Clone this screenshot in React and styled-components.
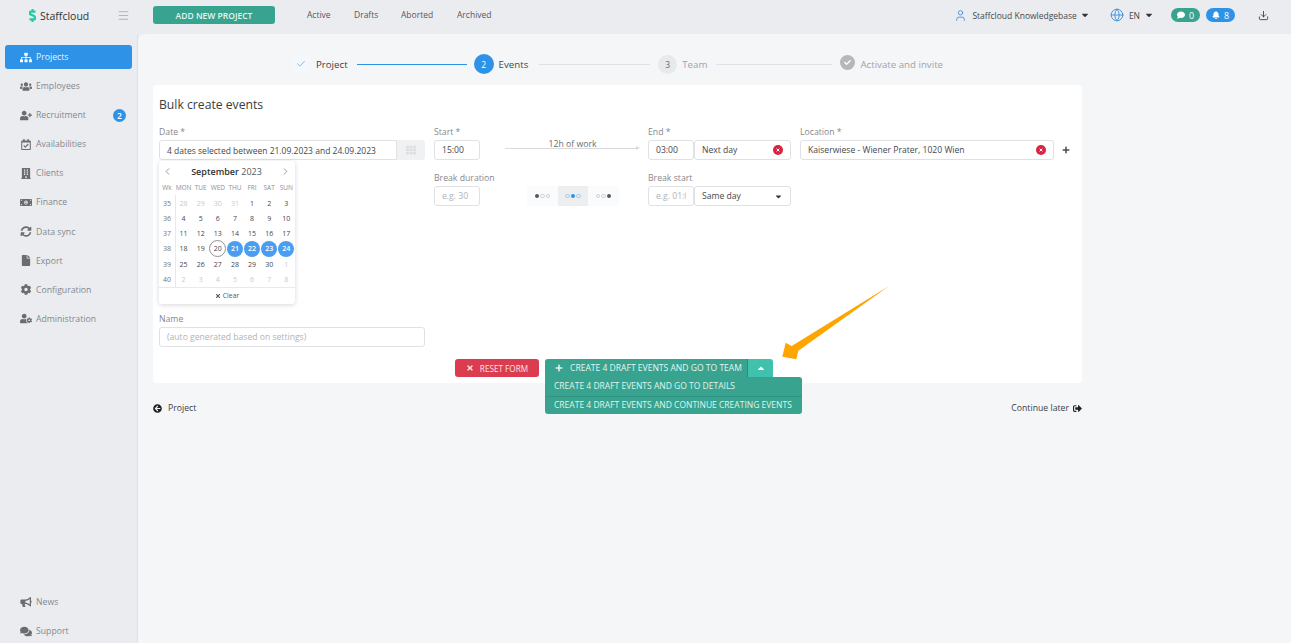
import styled, { createGlobalStyle } from 'styled-components'
import {
  FaSitemap, FaUsers, FaUserPlus, FaRegCalendarCheck, FaBuilding, FaMoneyBillAlt, FaSyncAlt, FaFile,
  FaCog, FaUserCog, FaBullhorn, FaComments, FaComment, FaBell, FaCaretDown, FaCaretUp, FaTimes, FaPlus,
  FaArrowCircleLeft, FaSignOutAlt, FaTh, FaCheck,
} from 'react-icons/fa'
import { User, Globe, Download, Menu, ChevronLeft, ChevronRight, Check } from 'lucide-react'

const GlobalStyle = createGlobalStyle`
  html, body { margin: 0; padding: 0; height: 100%; }
  body { background: #ebecf0; font-family: "Open Sans", "Noto Sans", sans-serif; font-size: 9px; color: #3c4043; overflow: hidden; }
  * { box-sizing: border-box; }
`

const Shell = styled.div`
  height: 100vh;
  display: flex;
  flex-direction: column;
`

const TopBar = styled.header`
  height: 34px;
  flex: none;
  display: flex;
  align-items: center;
  position: relative;
`

const Brand = styled.div`
  width: 117px;
  padding-left: 29px;
  display: flex;
  align-items: center;
  gap: 4px;
  font-size: 10.5px;
  font-weight: 500;
  color: #333;
  margin-top: -3px;
`

const MenuButton = styled.div`
  width: 36px;
  display: flex;
  color: #a5a7ab;
  margin-top: -3px;
`

const AddButton = styled.button`
  width: 122px;
  height: 18px;
  margin-top: -4px;
  border: 0;
  border-radius: 3px;
  background: #38a38e;
  color: #e4f5f0;
  font: 600 8.5px "Open Sans", sans-serif;
`

const Tabs = styled.nav`
  display: flex;
  margin-left: 32px;
  margin-top: -5px;
`

const Tab = styled.span`
  width: ${p => p.$w}px;
  color: #55585c;
  font-size: 8.5px;
`

const TopRight = styled.div`
  margin-left: auto;
  display: flex;
  align-items: center;
  margin-top: -4px;
  color: #45484c;
  font-size: 8.5px;
`

const TopLabel = styled.span`
  margin-left: 5px;
`

const Pill = styled.span`
  width: 29px;
  height: 14px;
  border-radius: 7px;
  background: ${p => p.$bg};
  color: #fff;
  display: flex;
  align-items: center;
  justify-content: center;
  gap: 4px;
  font-size: 9px;
  margin-left: ${p => p.$ml}px;
`

const Caret = styled.span`
  display: flex;
  margin: 0 ${p => p.$mr}px 0 ${p => p.$ml}px;
  color: #333;
`

const Body = styled.div`
  flex: 1;
  display: flex;
  min-height: 0;
`

const Sidebar = styled.aside`
  width: 138px;
  flex: none;
  display: flex;
  flex-direction: column;
  padding: 11px 5px 0 5px;
  border-right: 1px solid #e0e1e5;
`

const NavItem = styled.div`
  height: ${p => p.$active ? 24 : 29.1}px;
  margin-bottom: ${p => p.$active ? 2.5 : 0}px;
  padding-left: 15px;
  flex: none;
  display: flex;
  align-items: center;
  gap: 4px;
  border-radius: 3px;
  background: ${p => p.$active ? '#2e93e6' : 'transparent'};
  color: ${p => p.$active ? '#e6f2fc' : '#85888c'};
  font-size: 8.7px;
  position: relative;
  svg { color: ${p => p.$active ? '#fff' : '#6a6c70'}; width: 12px; flex: none; }
`

const NavBadge = styled.span`
  position: absolute;
  right: 6px;
  top: 8px;
  width: 13px;
  height: 13px;
  border-radius: 50%;
  background: #2e93e6;
  color: #fff;
  font-size: 8.5px;
  font-weight: 600;
  display: flex;
  align-items: center;
  justify-content: center;
`

const NavBottom = styled.div`
  margin-top: auto;
  margin-bottom: -3px;
`

const Main = styled.main`
  flex: 1;
  min-width: 0;
  background: #f5f6f8;
  border-top-left-radius: 7px;
  padding: 0 209px 0 15px;
`

const Stepper = styled.div`
  height: 51px;
  padding: 9px 0 0 138px;
  display: flex;
  align-items: center;
  font-size: 9.7px;
`

const StepDot = styled.span`
  width: ${p => p.$size}px;
  height: ${p => p.$size}px;
  flex: none;
  border-radius: 50%;
  background: ${p => p.$bg};
  color: ${p => p.$color};
  display: flex;
  align-items: center;
  justify-content: center;
  font-size: 8.5px;
  margin-top: ${p => p.$raise ? -3 : 0}px;
`

const StepLabel = styled.span`
  margin: 0 ${p => p.$mr || 9}px 0 5px;
  color: ${p => p.$color};
  white-space: nowrap;
`

const StepLine = styled.span`
  width: ${p => p.$w}px;
  height: 1px;
  margin-right: ${p => p.$mr}px;
  background: ${p => p.$bg};
`

const Card = styled.section`
  height: 298px;
  background: #fff;
  border-radius: 4px;
  padding: 12px 6px 0;
  position: relative;
`

const Title = styled.h2`
  margin: 0 0 15px;
  font-size: 12.2px;
  line-height: 16px;
  font-weight: 400;
  color: #3a3d40;
`

const FormGrid = styled.div`
  display: grid;
  grid-template-columns: 266px 55px 168px 143px 263px 22px;
  row-gap: 14px;
`

const Field = styled.div`
  margin-left: ${p => p.$ml || 0}px;
  min-width: 0;
`

const Label = styled.label`
  display: block;
  height: 9px;
  line-height: 9px;
  margin-bottom: 3px;
  color: #85888c;
  font-size: 8.7px;
  white-space: nowrap;
`

const InputRow = styled.div`
  display: flex;
`

const Input = styled.div`
  height: 20px;
  width: ${p => p.$w ? `${p.$w}px` : '100%'};
  flex: ${p => p.$w ? 'none' : 1};
  padding: 0 7px;
  display: flex;
  align-items: center;
  justify-content: space-between;
  border: 1px solid #dfe1e4;
  border-radius: 3px;
  background: #fff;
  color: ${p => p.$muted ? '#b0b3b7' : '#45484c'};
  font-size: 8.6px;
  white-space: nowrap;
  overflow: hidden;
`

const Clipped = styled.span`
  overflow: hidden;
`

const DateInput = styled(Input)`
  flex: 1;
  border-radius: 3px 0 0 3px;
  font-size: 8.5px;
`

const CalButton = styled.div`
  width: 28px;
  height: 20px;
  background: #f0f1f3;
  color: #dcdee0;
  display: flex;
  align-items: center;
  justify-content: center;
  border-radius: 0 3px 3px 0;
`

const WorkSpan = styled.div`
  margin: 10px 8px 0 25px;
  height: 20px;
  position: relative;
  text-align: center;
  color: #6a6d70;
  font-size: 8.7px;
  line-height: 12px;
  &::before {
    content: '';
    position: absolute;
    left: 0;
    right: 4px;
    top: 10px;
    height: 1px;
    background: #d8dadd;
  }
  &::after {
    content: '';
    position: absolute;
    right: 0;
    top: 8px;
    border-left: 4px solid #d8dadd;
    border-top: 2.5px solid transparent;
    border-bottom: 2.5px solid transparent;
  }
`

const Segments = styled.div`
  margin: 12px 0 0 47px;
  display: flex;
  width: 92px;
  height: 20px;
  background: #fafbfc;
  border-radius: 3px;
`

const Segment = styled.div`
  flex: 1;
  display: flex;
  align-items: center;
  justify-content: center;
  gap: 1px;
  background: ${p => p.$active ? '#eceef0' : 'transparent'};
`

const Dot = styled.i`
  width: 4.5px;
  height: 4.5px;
  border-radius: 50%;
  background: ${p => p.$on ? p.$color : 'transparent'};
  border: ${p => p.$on ? 0 : `1px solid ${p.$color === '#2e93e6' ? '#a5d0f2' : '#cfd1d4'}`};
`

const AddLocation = styled.span`
  display: flex;
  align-items: center;
  justify-content: center;
  width: 20px;
  height: 20px;
  margin: 12px 0 0 2px;
  color: #4a4d50;
`

const NameField = styled.div`
  width: 266px;
  margin-top: 109px;
`

const Actions = styled.div`
  margin-top: 12px;
  padding-left: 296px;
  display: flex;
  align-items: flex-start;
  gap: 6px;
`

const ActionButton = styled.button`
  height: 18px;
  border: 0;
  padding: 0;
  display: flex;
  align-items: center;
  color: #e8f5f2;
  font: 400 8.55px "Open Sans", sans-serif;
  white-space: nowrap;
`

const ResetButton = styled(ActionButton)`
  width: 84px;
  justify-content: center;
  gap: 6px;
  background: #dc3c4f;
  border-radius: 3px;
  color: #fbe3e5;
  font-size: 8.2px;
`

const SplitGroup = styled.div`
  position: relative;
  display: flex;
`

const SplitMain = styled(ActionButton)`
  width: 203px;
  padding-left: 10px;
  gap: 7px;
  background: #38a38e;
  border-radius: 3px 0 0 0;
  border-right: 1px solid #2f8c7a;
`

const SplitToggle = styled(ActionButton)`
  width: 25px;
  justify-content: center;
  background: #40c1ac;
  border-radius: 0 3px 0 0;
  color: #fff;
`

const Dropdown = styled.div`
  position: absolute;
  left: 0;
  top: 18px;
  width: 257px;
  background: #38a38e;
  border-radius: 0 3px 3px 3px;
  overflow: hidden;
  z-index: 3;
`

const DropdownItem = styled.div`
  height: 18.5px;
  padding: 0 0 1px 9px;
  display: flex;
  align-items: center;
  color: #e0f3ee;
  font-size: 8.5px;
  white-space: nowrap;
  & + & { border-top: 1px solid #2f9582; }
`

const BottomLinks = styled.div`
  margin-top: 19px;
  display: flex;
  justify-content: space-between;
  align-items: center;
  font-size: 8.7px;
`

const LinkItem = styled.span`
  display: flex;
  align-items: center;
  gap: ${p => p.$gap}px;
  color: #3c3f42;
`

const Calendar = styled.div`
  position: absolute;
  left: 6px;
  top: 76px;
  width: 136px;
  height: 143px;
  background: #fff;
  border-radius: 3px;
  box-shadow: 0 1px 5px rgba(0, 0, 0, 0.16);
  z-index: 2;
`

const CalHead = styled.div`
  height: 19px;
  padding: 1px 4px 0 3px;
  display: flex;
  align-items: center;
  justify-content: space-between;
  color: #55585c;
  b { font-weight: 600; color: #333; font-size: 9px; }
  span { font-size: 9px; color: #55585c; }
`

const CalGrid = styled.div`
  display: grid;
  grid-template-columns: 16px repeat(7, 17.14px);
  grid-template-rows: 15.8px;
  grid-auto-rows: 15.2px;
  position: relative;
  &::before {
    content: '';
    position: absolute;
    left: 16px;
    top: 15px;
    bottom: 0;
    width: 1px;
    background: #e8e9eb;
  }
`

const CalCell = styled.span`
  display: flex;
  align-items: center;
  justify-content: center;
  font-size: ${p => p.$head ? 6.5 : 7}px;
  color: ${p => p.$head ? '#8d9094' : p.$off ? '#c8cacd' : p.$wk ? '#75787c' : '#45484c'};
  position: relative;
  z-index: 0;
  ${p => p.$sel && `
    color: #fff;
    font-weight: 600;
    &::before { content: ''; position: absolute; width: 16px; height: 16px; border-radius: 50%; background: #4a9df0; z-index: -1; }
  `}
  ${p => p.$today && `
    &::before { content: ''; position: absolute; width: 15px; height: 15px; border-radius: 50%; border: 1px solid #8d9094; z-index: -1; }
  `}
`

const CalFoot = styled.div`
  height: 17px;
  border-top: 1px solid #e8e9eb;
  display: flex;
  align-items: center;
  justify-content: center;
  gap: 2px;
  color: #55585c;
  font-size: 6.8px;
`

const PointerArrow = styled.svg`
  position: absolute;
  left: 0;
  top: 0;
  width: 1291px;
  height: 643px;
  pointer-events: none;
  z-index: 5;
`

const nav = [
  ['Employees', FaUsers], ['Recruitment', FaUserPlus, 2], ['Availabilities', FaRegCalendarCheck], ['Clients', FaBuilding],
  ['Finance', FaMoneyBillAlt], ['Data sync', FaSyncAlt], ['Export', FaFile], ['Configuration', FaCog], ['Administration', FaUserCog],
]

const weekdays = ['Wk', 'MON', 'TUE', 'WED', 'THU', 'FRI', 'SAT', 'SUN']

const weeks = [
  [35, [28, 29, 30, 31, 1, 2, 3]],
  [36, [4, 5, 6, 7, 8, 9, 10]],
  [37, [11, 12, 13, 14, 15, 16, 17]],
  [38, [18, 19, 20, 21, 22, 23, 24]],
  [39, [25, 26, 27, 28, 29, 30, 1]],
  [40, [2, 3, 4, 5, 6, 7, 8]],
]

const ClearIcon = () => (
  <svg width="10" height="10" viewBox="0 0 10 10">
    <circle cx="5" cy="5" r="5" fill="#d9233f" />
    <path d="M3.6 3.6 L6.4 6.4 M6.4 3.6 L3.6 6.4" stroke="#fff" strokeWidth="1" />
  </svg>
)

const DotGroup = ({ on, color, active }) => (
  <Segment $active={active}>
    {[0, 1, 2].map(i => <Dot key={i} $on={i === on} $color={color} />)}
  </Segment>
)

export default function App() {
  return (
    <Shell>
      <GlobalStyle />
      <TopBar>
        <Brand>
          <svg width="7" height="13" viewBox="0 0 7 13">
            <path d="M6.5 2.6 L2 2.6 Q0.9 2.6 0.9 4 Q0.9 5.2 2 5.6 L5 7 Q6.1 7.6 6.1 9 Q6.1 10.4 5 10.4 L0.5 10.4" fill="none" stroke="#1fc9a4" strokeWidth="2.2" />
            <path d="M3.5 0 V2 M3.5 11 V13" stroke="#1fc9a4" strokeWidth="2" />
          </svg>
          Staffcloud
        </Brand>
        <MenuButton><Menu size={13} strokeWidth={1.5} /></MenuButton>
        <AddButton>ADD NEW PROJECT</AddButton>
        <Tabs>
          <Tab $w={47}>Active</Tab>
          <Tab $w={47}>Drafts</Tab>
          <Tab $w={56}>Aborted</Tab>
          <Tab $w={40}>Archived</Tab>
        </Tabs>
        <TopRight>
          <User size={13} color="#3d8fdc" strokeWidth={1.6} />
          <TopLabel>Staffcloud Knowledgebase</TopLabel>
          <Caret $ml={3} $mr={20}><FaCaretDown size={10} /></Caret>
          <Globe size={14} color="#3d8fdc" strokeWidth={1.6} />
          <TopLabel>EN</TopLabel>
          <Caret $ml={4} $mr={0}><FaCaretDown size={10} /></Caret>
          <Pill $bg="#38a38e" $ml={17}><FaComment size={8} />0</Pill>
          <Pill $bg="#2e93e6" $ml={6}><FaBell size={8} />8</Pill>
          <Caret $ml={23} $mr={22}><Download size={11} strokeWidth={1.8} /></Caret>
        </TopRight>
      </TopBar>
      <Body>
        <Sidebar>
          <NavItem $active><FaSitemap size={11} />Projects</NavItem>
          {nav.map(([label, Icon, badge]) => (
            <NavItem key={label}>
              <Icon size={11} />{label}
              {badge && <NavBadge>{badge}</NavBadge>}
            </NavItem>
          ))}
          <NavBottom>
            <NavItem><FaBullhorn size={10} />News</NavItem>
            <NavItem><FaComments size={11} />Support</NavItem>
          </NavBottom>
        </Sidebar>
        <Main>
          <Stepper>
            <StepDot $size={20} $bg="#f3f8fd" $color="#2e93e6"><Check size={10} strokeWidth={1.5} /></StepDot>
            <StepLabel $color="#3c3f42">Project</StepLabel>
            <StepLine $w={110} $mr={7} $bg="#2e93e6" />
            <StepDot $size={20} $bg="#2e93e6" $color="#fff">2</StepDot>
            <StepLabel $color="#45484c" $mr={11}>Events</StepLabel>
            <StepLine $w={111} $mr={8} $bg="#dfe1e4" />
            <StepDot $size={19} $bg="#e8e9eb" $color="#6a6d70">3</StepDot>
            <StepLabel $color="#a0a3a7">Team</StepLabel>
            <StepLine $w={116} $mr={8} $bg="#dfe1e4" />
            <StepDot $size={15} $bg="#b5b7ba" $color="#fff" $raise><FaCheck size={7} /></StepDot>
            <StepLabel $color="#a0a3a7">Activate and invite</StepLabel>
          </Stepper>
          <Card>
            <Title>Bulk create events</Title>
            <FormGrid>
              <Field>
                <Label>Date *</Label>
                <InputRow>
                  <DateInput>4 dates selected between 21.09.2023 and 24.09.2023</DateInput>
                  <CalButton><FaTh size={10} /></CalButton>
                </InputRow>
              </Field>
              <Field $ml={9}>
                <Label>Start *</Label>
                <Input>15:00</Input>
              </Field>
              <WorkSpan>12h of work</WorkSpan>
              <Field>
                <Label>End *</Label>
                <InputRow>
                  <Input $w={46}>03:00</Input>
                  <Input>Next day<ClearIcon /></Input>
                </InputRow>
              </Field>
              <Field $ml={9}>
                <Label>Location *</Label>
                <Input>Kaiserwiese - Wiener Prater, 1020 Wien<ClearIcon /></Input>
              </Field>
              <AddLocation><FaPlus size={8} /></AddLocation>

              <span />
              <Field $ml={9}>
                <Label>Break duration</Label>
                <Input $muted>e.g. 30</Input>
              </Field>
              <Segments>
                <DotGroup on={0} color="#55585c" />
                <DotGroup on={1} color="#2e93e6" active />
                <DotGroup on={2} color="#55585c" />
              </Segments>
              <Field>
                <Label>Break start</Label>
                <InputRow>
                  <Input $w={46} $muted><Clipped>e.g. 01:00</Clipped></Input>
                  <Input>Same day<FaCaretDown size={9} color="#333" /></Input>
                </InputRow>
              </Field>
            </FormGrid>
            <NameField>
              <Label>Name</Label>
              <Input $muted>(auto generated based on settings)</Input>
            </NameField>
            <Actions>
              <ResetButton><FaTimes size={8} />RESET FORM</ResetButton>
              <SplitGroup>
                <SplitMain><FaPlus size={8} />CREATE 4 DRAFT EVENTS AND GO TO TEAM</SplitMain>
                <SplitToggle><FaCaretUp size={10} /></SplitToggle>
                <Dropdown>
                  <DropdownItem>CREATE 4 DRAFT EVENTS AND GO TO DETAILS</DropdownItem>
                  <DropdownItem>CREATE 4 DRAFT EVENTS AND CONTINUE CREATING EVENTS</DropdownItem>
                </Dropdown>
              </SplitGroup>
            </Actions>
            <Calendar>
              <CalHead>
                <ChevronLeft size={11} strokeWidth={1.3} />
                <div><b>September</b> <span>2023</span></div>
                <ChevronRight size={11} strokeWidth={1.3} />
              </CalHead>
              <CalGrid>
                {weekdays.map(d => <CalCell key={d} $head>{d}</CalCell>)}
                {weeks.map(([wk, days], r) => [
                  <CalCell key={wk} $wk>{wk}</CalCell>,
                  ...days.map((d, i) => (
                    <CalCell
                      key={`${r}-${i}`}
                      $off={(r === 0 && d > 20) || (r === 4 && d === 1) || r === 5}
                      $sel={r === 3 && d >= 21}
                      $today={r === 3 && d === 20}
                    >{d}</CalCell>
                  )),
                ])}
              </CalGrid>
              <CalFoot><FaTimes size={6} />Clear</CalFoot>
            </Calendar>
          </Card>
          <BottomLinks>
            <LinkItem $gap={6}><FaArrowCircleLeft size={9} color="#222" />Project</LinkItem>
            <LinkItem $gap={4}>Continue later<FaSignOutAlt size={9} color="#222" /></LinkItem>
          </BottomLinks>
        </Main>
      </Body>
      <PointerArrow viewBox="0 0 1291 643">
        <polygon points="782.3,356.7 785.7,342.7 791.7,346 889,286 798.3,350.7 796.3,359.3" fill="#ffa500" />
      </PointerArrow>
    </Shell>
  )
}
